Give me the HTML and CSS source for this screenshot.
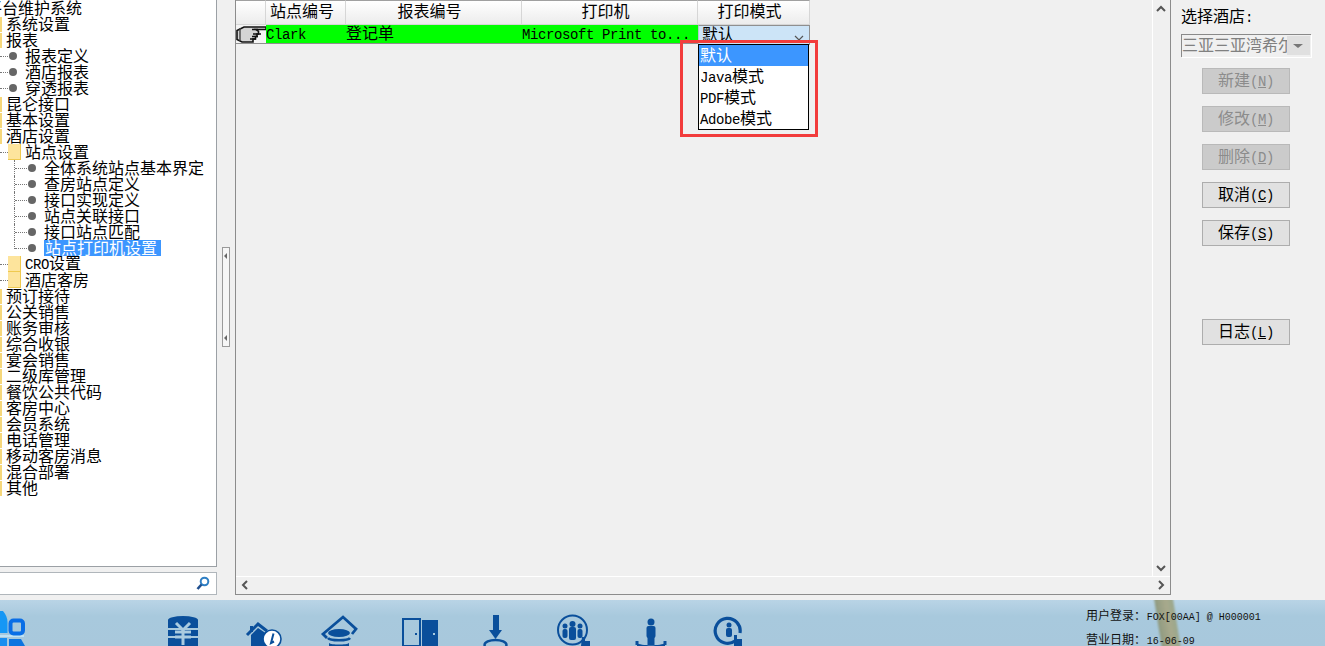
FILE: index.html
```html
<!DOCTYPE html>
<html>
<head>
	<title>站点打印机设置</title>
	<meta charset="utf-8">
	<link rel="stylesheet" href="styles.css">
</head>
<body>
	<div class="top">
		<div class="side">
			<div class="tree">
				<div class="row"><span class="lbl root">平台维护系统</span></div>
				<div class="row"><span class="bar"></span><span class="lbl">系统设置</span></div>
				<div class="row"><span class="bar"></span><span class="lbl">报表</span></div>
				<div class="row"><span class="dash"></span><span class="dot"></span><span class="lbl">报表定义</span></div>
				<div class="row"><span class="dash"></span><span class="dot"></span><span class="lbl">酒店报表</span></div>
				<div class="row"><span class="dash"></span><span class="dot"></span><span class="lbl">穿透报表</span></div>
				<div class="row"><span class="bar"></span><span class="lbl">昆仑接口</span></div>
				<div class="row"><span class="bar"></span><span class="lbl">基本设置</span></div>
				<div class="row"><span class="bar"></span><span class="lbl">酒店设置</span></div>
				<div class="row"><span class="dash"></span><span class="folder"></span><span class="lbl">站点设置</span></div>
				<div class="row"><span class="stem"></span><span class="dot"></span><span class="lbl">全体系统站点基本界定</span></div>
				<div class="row"><span class="stem"></span><span class="dot"></span><span class="lbl">查房站点定义</span></div>
				<div class="row"><span class="stem"></span><span class="dot"></span><span class="lbl">接口实现定义</span></div>
				<div class="row"><span class="stem"></span><span class="dot"></span><span class="lbl">站点关联接口</span></div>
				<div class="row"><span class="stem"></span><span class="dot"></span><span class="lbl">接口站点匹配</span></div>
				<div class="row"><span class="stem last"></span><span class="dot"></span><span class="lbl sel">站点打印机设置</span></div>
				<div class="row"><span class="dash"></span><span class="folder"></span><span class="lbl"><span class="lat">CRO</span>设置</span></div>
				<div class="row"><span class="dash"></span><span class="folder"></span><span class="lbl">酒店客房</span></div>
				<div class="row"><span class="bar"></span><span class="lbl">预订接待</span></div>
				<div class="row"><span class="bar"></span><span class="lbl">公关销售</span></div>
				<div class="row"><span class="bar"></span><span class="lbl">账务审核</span></div>
				<div class="row"><span class="bar"></span><span class="lbl">综合收银</span></div>
				<div class="row"><span class="bar"></span><span class="lbl">宴会销售</span></div>
				<div class="row"><span class="bar"></span><span class="lbl">二级库管理</span></div>
				<div class="row"><span class="bar"></span><span class="lbl">餐饮公共代码</span></div>
				<div class="row"><span class="bar"></span><span class="lbl">客房中心</span></div>
				<div class="row"><span class="bar"></span><span class="lbl">会员系统</span></div>
				<div class="row"><span class="bar"></span><span class="lbl">电话管理</span></div>
				<div class="row"><span class="bar"></span><span class="lbl">移动客房消息</span></div>
				<div class="row"><span class="bar"></span><span class="lbl">混合部署</span></div>
				<div class="row"><span class="bar"></span><span class="lbl">其他</span></div>
			</div>
			<div class="search">
				<svg width="14" height="15" viewBox="0 0 14 15"><circle cx="8.5" cy="5.5" r="3.8" fill="none" stroke="#2f7fc4" stroke-width="2"/><path d="M5.5 8.5L1.5 13" stroke="#1f4f8f" stroke-width="2.6"/></svg>
			</div>
		</div>

		<div class="gutter">
			<div class="handle">
				<svg width="6" height="8" viewBox="0 0 6 8"><path d="M4 1v6L1 4z" fill="#666"/></svg>
				<svg width="6" height="8" viewBox="0 0 6 8"><path d="M4 1v6L1 4z" fill="#666"/></svg>
			</div>
		</div>

		<div class="panel">
			<div class="panel-body">
				<div class="grid-wrap">
					<div class="grid">
						<div class="hd"></div>
						<div class="hd">站点编号</div>
						<div class="hd">报表编号</div>
						<div class="hd">打印机</div>
						<div class="hd">打印模式</div>
						<div class="ind">
							<svg width="30" height="18" viewBox="0 0 30 18">
								<path d="M1 5.500L8 2H30V4.500H20L22.500 6.500V9H21V11.500H19.500V14H17V17H6L1 14.500z" fill="#d4d4d4" stroke="#111" stroke-width="1.600"/>
								<path d="M4 3V16" stroke="#444" stroke-width="1.400"/>
								<path d="M16 4.500H22M17 9H25M16 11.500H22M14 14H20" stroke="#111" stroke-width="1.400" fill="none"/>
							</svg>
						</div>
						<div class="cell"><span class="lat">Clark</span></div>
						<div class="cell">登记单</div>
						<div class="cell"><span class="lat">Microsoft Print to...</span></div>
						<div class="cell-edit">
							<span>默认</span>
							<svg width="10" height="6" viewBox="0 0 10 6"><path d="M1 1l4 4 4-4" fill="none" stroke="#555" stroke-width="1.2"/></svg>
						</div>
					</div>
				</div>
				<div class="vbar">
					<svg width="16" height="10" viewBox="0 0 16 10"><path d="M4 7l4-4 4 4" fill="none" stroke="#555" stroke-width="2"/></svg>
					<svg width="16" height="10" viewBox="0 0 16 10"><path d="M4 3l4 4 4-4" fill="none" stroke="#555" stroke-width="2"/></svg>
				</div>
			</div>
			<div class="hbar">
				<svg width="10" height="16" viewBox="0 0 10 16"><path d="M7 4L3 8l4 4" fill="none" stroke="#555" stroke-width="2"/></svg>
				<svg width="10" height="16" viewBox="0 0 10 16"><path d="M3 4l4 4-4 4" fill="none" stroke="#555" stroke-width="2"/></svg>
			</div>

			<div class="redbox"></div>
			<div class="drop">
				<div class="opt on">默认</div>
				<div class="opt"><span class="lat">Java</span>模式</div>
				<div class="opt"><span class="lat">PDF</span>模式</div>
				<div class="opt"><span class="lat">Adobe</span>模式</div>
			</div>
		</div>

		<div class="right">
			<div class="pick">选择酒店<span class="lat">:</span></div>
			<div class="combo">
				<span class="combo-txt">三亚三亚湾希尔顿酒店</span>
				<span class="combo-btn"></span>
			</div>
			<div class="btn off first">新建<span class="lat">(<u>N</u>)</span></div>
			<div class="btn off">修改<span class="lat">(<u>M</u>)</span></div>
			<div class="btn off">删除<span class="lat">(<u>D</u>)</span></div>
			<div class="btn">取消<span class="lat">(<u>C</u>)</span></div>
			<div class="btn">保存<span class="lat">(<u>S</u>)</span></div>
			<div class="btn log">日志<span class="lat">(<u>L</u>)</span></div>
		</div>
	</div>

	<div class="foot">
		<div class="stripe"></div>
		<svg class="logo" width="30" height="46" viewBox="0 0 30 46">
			<path d="M-2 11H3C6 15 7.500 18 7.500 22V33H-2z" fill="#1597f5"/>
			<path d="M-2 38H7V46H-2z" fill="#1a8ef0"/>
			<path d="M9 39H21L25 46H9z" fill="#0d74e0"/>
			<path d="M-2 35H24V37H-2z" fill="#bfe2f5"/>
			<rect x="10.500" y="20.500" width="12.500" height="13" rx="3" fill="none" stroke="#0a6ee6" stroke-width="4"/>
		</svg>
		<div class="icons">
			<div class="ico">
				<svg width="40" height="46" viewBox="0 0 40 46">
					<ellipse cx="20" cy="20" rx="15" ry="4" fill="#0a4f9b"/>
					<rect x="5" y="20" width="30" height="8" fill="#0a4f9b"/>
					<rect x="5" y="30" width="30" height="6" fill="#0a4f9b"/>
					<rect x="5" y="38" width="30" height="8" fill="#0a4f9b"/>
					<path d="M13 23l7 7 7-7M20 30v15M12 32h16M12 37h16" fill="none" stroke="#a9cbe0" stroke-width="3"/>
				</svg>
			</div>
			<div class="ico">
				<svg width="40" height="46" viewBox="0 0 40 46">
					<path d="M6 35L17 24l9 7" fill="none" stroke="#0a4f9b" stroke-width="3"/>
					<path d="M10 35l7-7 9 6v12H10z" fill="#0a4f9b"/>
					<rect x="9" y="26" width="3" height="6" fill="#0a4f9b"/>
					<circle cx="31" cy="39" r="9" fill="#fff" stroke="#0a4f9b" stroke-width="1.600"/>
					<path d="M32.500 33.500L30 43l3-1.500" fill="none" stroke="#0a4f9b" stroke-width="2"/>
				</svg>
			</div>
			<div class="ico">
				<svg width="40" height="46" viewBox="0 0 40 46">
					<path d="M8 38L4 34 24 17l13 12-4 5" fill="none" stroke="#0a4f9b" stroke-width="2.800"/>
					<ellipse cx="20" cy="33" rx="11" ry="4" fill="#0a4f9b"/>
					<path d="M9 38c2 3 20 3 22 0" fill="none" stroke="#0a4f9b" stroke-width="2.600"/>
					<path d="M10 43c2 2 18 2 20 0v3H10z" fill="#0a4f9b"/>
				</svg>
			</div>
			<div class="ico">
				<svg width="40" height="46" viewBox="0 0 40 46">
					<rect x="6" y="19" width="17" height="27" fill="none" stroke="#0a4f9b" stroke-width="2"/>
					<rect x="25" y="20" width="16" height="26" fill="#0a4f9b"/>
					<rect x="18" y="33" width="2" height="2" fill="#0a4f9b"/>
					<rect x="36" y="33" width="2" height="2" fill="#a9cbe0"/>
				</svg>
			</div>
			<div class="ico">
				<svg width="40" height="46" viewBox="0 0 40 46">
					<rect x="18" y="15" width="6" height="18" fill="#0a4f9b"/>
					<path d="M14 30h13l-6.500 9z" fill="#0a4f9b"/>
					<ellipse cx="20.500" cy="45" rx="11" ry="5" fill="none" stroke="#0a4f9b" stroke-width="2.400"/>
				</svg>
			</div>
			<div class="ico">
				<svg width="40" height="46" viewBox="0 0 40 46">
					<circle cx="19.500" cy="30" r="14.500" fill="none" stroke="#0a4f9b" stroke-width="2"/>
					<circle cx="19.500" cy="24" r="3" fill="#0a4f9b"/><rect x="16" y="27" width="7" height="13" rx="2" fill="#0a4f9b"/>
					<circle cx="12" cy="26" r="2.500" fill="#0a4f9b"/><rect x="9.500" y="29" width="5" height="9" rx="2" fill="#0a4f9b"/>
					<circle cx="27" cy="26" r="2.500" fill="#0a4f9b"/><rect x="24.500" y="29" width="5" height="9" rx="2" fill="#0a4f9b"/>
					<path d="M29 37h3v4h5v5h-9z" fill="#0a4f9b"/>
				</svg>
			</div>
			<div class="ico">
				<svg width="40" height="46" viewBox="0 0 40 46">
					<circle cx="20" cy="22" r="3.500" fill="#0a4f9b"/>
					<rect x="15.500" y="26" width="9" height="12" rx="2" fill="#0a4f9b"/>
					<rect x="16.500" y="36" width="7" height="9" fill="#0a4f9b"/>
					<path d="M6 43c3 3 25 3 28 0v3H6z" fill="#0a4f9b"/>
					<path d="M6 41v4M34 41v4" stroke="#0a4f9b" stroke-width="3"/>
				</svg>
			</div>
			<div class="ico">
				<svg width="40" height="46" viewBox="0 0 40 46">
					<path d="M26 41A12.500 12.500 0 1 1 31 33" fill="none" stroke="#0a4f9b" stroke-width="3.200"/>
					<circle cx="20" cy="25" r="2.500" fill="#0a4f9b"/>
					<rect x="17" y="28" width="6" height="9" rx="2" fill="#0a4f9b"/>
					<path d="M25 35h3v4h5v7h-8z" fill="#0a4f9b"/>
				</svg>
			</div>
		</div>
		<div class="user">
			<div class="user-line">用户登录： <span class="mini">FOX[00AA] @ H000001</span></div>
			<div class="user-line">营业日期： <span class="mini">16-06-09</span></div>
		</div>
	</div>
</body>
</html>
```

FILE: styles.css
```css
html, body {
	margin: 0;
	height: 646px;
	overflow: hidden;
}
body {
	background-color: #f0f0f0;
	color: #000;
	font-family: "Noto Sans CJK SC", "Liberation Sans", sans-serif;
	font-size: 16px;
	line-height: 16px;
	display: flex;
	flex-direction: column;
}
.lat {
	font-family: "Liberation Mono", monospace;
	font-size: 14px;
	letter-spacing: -0.4px;
}
.top {
	display: flex;
	height: 600px;
}

/* left tree */
.side {
	width: 217px;
	flex: none;
}
.tree {
	height: 566px;
	background: #fff;
	border-right: 1px solid #9ba0a5;
	border-bottom: 1px solid #9ba0a5;
	overflow: hidden;
}
.row {
	display: flex;
	height: 16px;
	align-items: center;
	white-space: nowrap;
}
.lbl {
	flex: none;
	margin: -2px 0 0 -1px;
}
.lbl.root { margin-left: -14px; }
.bar {
	width: 2px;
	height: 15px;
	margin-right: 5px;
	background: #f6d77a;
}
.dash {
	width: 8px;
	border-top: 1px dotted #777;
}
.dot {
	width: 8px;
	height: 8px;
	margin: 0 9px 0 1px;
	border-radius: 50%;
	background: #666;
}
.folder {
	width: 12px;
	height: 15px;
	margin-right: 5px;
	background: #fde49c;
	border: 1px solid #efc94f;
	border-width: 0 1px 1px 0;
}
.stem {
	width: 13px;
	height: 16px;
	margin: 0 1px 0 14px;
	box-sizing: border-box;
	border-left: 1px dotted #777;
}
.stem::before {
	content: "";
	display: block;
	margin-top: 8px;
	border-top: 1px dotted #777;
}
.stem.last {
	height: 9px;
	align-self: flex-start;
}
.stem + .dot { margin-left: 0; }
.lbl.sel {
	background: #3c96ff;
	color: #fff;
	height: 16px;
	margin-top: 0;
	line-height: 14px;
	padding: 0 4px 0 1px;
	margin-left: -1px;
}
.search {
	height: 21px;
	margin-top: 5px;
	background: #fff;
	border: 1px solid #b0b6bb;
	border-left: 0;
	display: flex;
	align-items: center;
	justify-content: flex-end;
	padding-right: 6px;
}

/* splitter */
.gutter {
	width: 18px;
	flex: none;
}
.handle {
	width: 6px;
	height: 90px;
	margin: 247px 0 0 5px;
	border: 1px solid #9a9a9a;
	background: #f6f6f6;
	display: flex;
	flex-direction: column;
	justify-content: space-between;
	padding: 4px 0;
}

/* middle panel */
.panel {
	position: relative;
	width: 934px;
	height: 594px;
	flex: none;
	border: 1px solid #8c8c8c;
	border-top: 0;
	display: flex;
	flex-direction: column;
}
.panel-body {
	flex: 1;
	display: flex;
	min-height: 0;
}
.grid-wrap { flex: 1; }
.grid {
	display: grid;
	grid-template-columns: 30px 80px 176px 176px 112px;
	grid-template-rows: 25px 19px;
	width: 574px;
}
.hd {
	box-sizing: border-box;
	border-top: 1px solid #a0a0a0;
	border-right: 1px solid #d6d6d6;
	border-bottom: 1px solid #d6d6d6;
	background: linear-gradient(#fff, #ececec);
	text-align: center;
	line-height: 18px;
	padding-right: 8px;
}
.hd:nth-child(2) { text-align: left; padding: 0 0 0 4px; }
.ind {
	background: #f4f4f4;
	border-bottom: 1px solid #8f8f8f;
	overflow: hidden;
}
.ind svg { display: block; }
.cell {
	background: #00ff00;
	border-bottom: 1px solid #8f8f8f;
	white-space: nowrap;
	line-height: 14px;
	height: 18px;
}
.cell-edit {
	box-sizing: border-box;
	background: #cce4f7;
	border: 1px solid #8f8f8f;
	border-left-color: #b9c6d0;
	display: flex;
	justify-content: space-between;
	padding: 0 5px 0 3px;
	height: 20px;
	line-height: 14px;
}
.cell-edit svg { margin-top: 9px; }
.vbar {
	width: 17px;
	flex: none;
	border-left: 1px solid #fff;
	display: flex;
	flex-direction: column;
	justify-content: space-between;
	padding: 4px 0 3px;
}
.hbar {
	height: 17px;
	flex: none;
	border-top: 1px solid #fff;
	display: flex;
	justify-content: space-between;
	padding: 0 4px;
}

/* open mode list, over the grid */
.redbox {
	position: absolute;
	left: 444px;
	top: 40px;
	width: 132px;
	height: 91px;
	border: 3px solid #f23c3c;
}
.drop {
	position: absolute;
	left: 462px;
	top: 44px;
	width: 109px;
	height: 84px;
	background: #fff;
	border: 1px solid #000;
}
.opt {
	height: 21px;
	line-height: 18px;
	padding-left: 1px;
	white-space: nowrap;
}
.opt.on {
	background: #3c96ff;
	color: #fff;
}

/* right buttons */
.right {
	flex: 1;
	padding: 7px 0 0 10px;
}
.pick { height: 16px; }
.combo {
	display: flex;
	width: 129px;
	height: 22px;
	margin-top: 11px;
	border: 1px solid #8a8a8a;
	border-width: 1px 0 0 1px;
	box-shadow: 1px 1px 0 #fff;
	color: #808080;
	overflow: hidden;
	line-height: 19px;
}
.combo-txt {
	width: 105px;
	flex: none;
	white-space: nowrap;
	overflow: hidden;
}
.combo-btn {
	width: 23px;
	height: 19px;
	margin-top: 1px;
	background: #e0e0e0;
	position: relative;
}
.combo-btn::after {
	content: "";
	position: absolute;
	left: 6px;
	top: 8px;
	border: 5px solid transparent;
	border-top: 4px solid #777;
	border-bottom: 0;
}
.btn {
	box-sizing: border-box;
	width: 88px;
	height: 26px;
	margin: 12px 0 0 21px;
	background: #e1e1e1;
	border: 1px solid #adadad;
	text-align: center;
	line-height: 21px;
	white-space: nowrap;
}
.btn.first { margin-top: 11px; }
.btn.off {
	background: #cbcbcb;
	border-color: #b9b9b9;
	color: #8c8c8c;
}
.btn.log { margin-top: 73px; }

/* bottom bar */
.foot {
	position: relative;
	height: 46px;
	flex: none;
	display: flex;
	background: linear-gradient(#b9d4e6, #a8c9dd 35%, #a8c8dc);
	overflow: hidden;
}
.logo { flex: none; }
.icons {
	display: flex;
	margin-left: 114px;
}
.ico {
	width: 78px;
	display: flex;
	justify-content: center;
}
.ico svg { overflow: visible; }
.user {
	position: relative;
	margin-left: 318px;
	padding-top: 3px;
	font-size: 12px;
	white-space: nowrap;
	color: #111;
}
.user-line {
	height: 24px;
	line-height: 24px;
}
.mini {
	font-family: "Liberation Mono", monospace;
	font-size: 10px;
	margin-left: -2px;
}
.stripe {
	position: absolute;
	left: 1158px;
	top: -4px;
	width: 19px;
	height: 56px;
	background: linear-gradient(90deg, #8f9a80, #a8a98c 60%, #9aa78c);
	transform: skewX(9deg);
	filter: blur(1px);
}
```
